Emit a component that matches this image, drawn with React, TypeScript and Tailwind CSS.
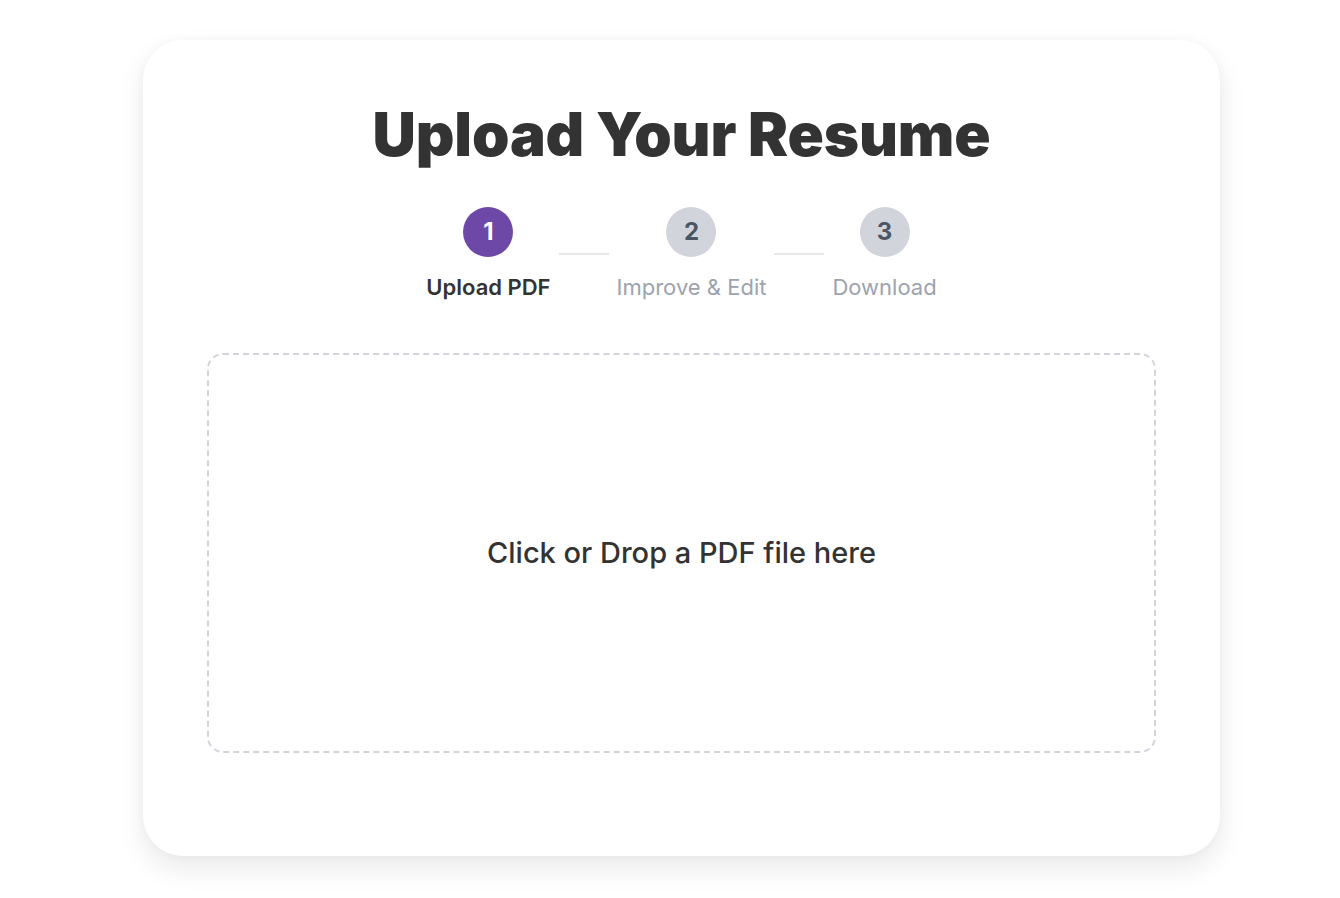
import React from "react";

const steps = [
  { n: "1", label: "Upload PDF", active: true },
  { n: "2", label: "Improve & Edit", active: false },
  { n: "3", label: "Download", active: false },
];

export default function App() {
  return (
    <div className="min-h-[898px] w-full bg-white pt-[40px] font-['Inter',sans-serif]">
      <div className="ml-[143px] w-[1077px] rounded-[40px] bg-white px-[64px] pt-[64px] pb-[103px] shadow-[0_12px_28px_rgba(0,0,0,0.09),0_0_10px_rgba(0,0,0,0.03)]">
        <h1 className="text-center text-[60px] leading-[60px] font-black tracking-[-0.002em] text-[#333333]">
          Upload Your Resume
        </h1>
        <div className="mt-[43px] flex items-center justify-center gap-2">
          {steps.map((s, i) => (
            <React.Fragment key={s.n}>
              {i > 0 && <div className="h-[2px] w-[50px] bg-[#e5e7eb]" />}
              <div className="flex flex-col items-center">
                <div
                  className={
                    s.active
                      ? "flex h-[50px] w-[50px] items-center justify-center rounded-full bg-[#6e48a6] text-[24px] font-bold text-white"
                      : "flex h-[50px] w-[50px] items-center justify-center rounded-full bg-[#d1d5db] text-[24px] font-bold text-[#4b5563]"
                  }
                >
                  {s.n}
                </div>
                <div
                  className={
                    s.active
                      ? "mt-4 text-[22px] leading-[28px] font-semibold text-[#333333]"
                      : "mt-4 text-[22px] leading-[28px] font-normal text-[#9ca3af]"
                  }
                >
                  {s.label}
                </div>
              </div>
            </React.Fragment>
          ))}
        </div>
        <div className="mt-[52px] flex h-[400px] items-center justify-center rounded-2xl border-2 border-dashed border-[#d1d5db]">
          <span className="text-[29px] font-medium text-[#333333]">Click or Drop a PDF file here</span>
        </div>
      </div>
    </div>
  );
}
